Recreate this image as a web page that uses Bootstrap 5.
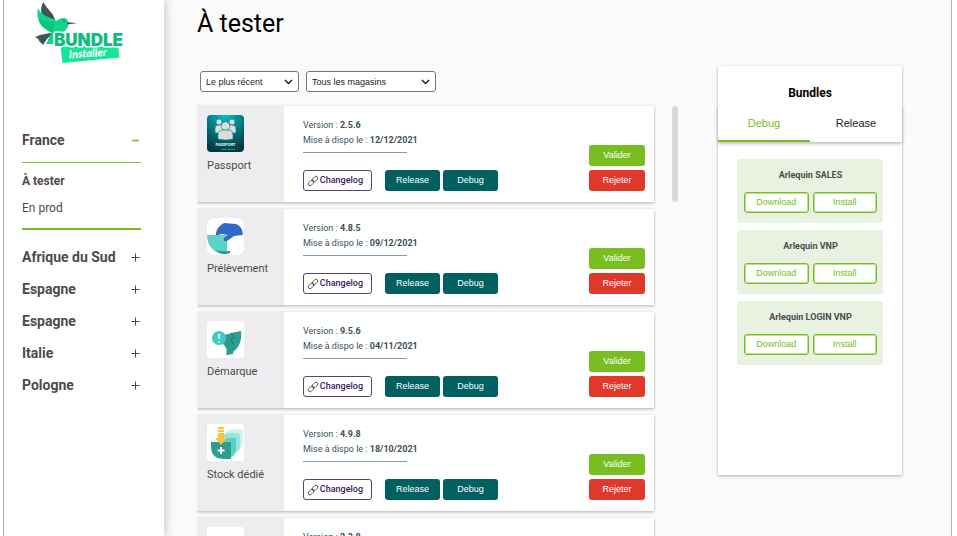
<!DOCTYPE html>
<html lang="fr">
<head>
<meta charset="utf-8">
<meta name="viewport" content="width=device-width, initial-scale=1">
<title>Bundle Installer</title>
<link href="https://cdn.jsdelivr.net/npm/bootstrap@5.3.0/dist/css/bootstrap.min.css" rel="stylesheet">
<style>
:root { --green: #78be20; --teal: #005f61; --ink: #3c4f5a; --grey: #4f4a4a; }
body { font-family: Roboto, "Noto Sans", sans-serif; color: var(--grey); }
.helv, select, .act { font-family: "Liberation Sans", Arial, sans-serif; }
.shell { height: 100vh; margin: 0 5px 0 3px; border: solid #b4b4b4; border-width: 0 1px; background: #fafafa; }
.side { width: 160px; padding: 0 23px 0 18px; background: #fff; box-shadow: 1px 0 10px rgba(0,0,0,.22); z-index: 1; }
.logo { margin: 0 0 60px 12px; display: block; }
.country { font-size: 14px; font-weight: 700; line-height: 18px; padding: 7px 0; margin: 0; border: 0; background: none; color: inherit; text-align: left; }
.sub { border: solid var(--green); border-width: 1px 0 2px; margin: 6px 0 11px; padding: 5px 0 6px; font-size: 12px; }
.sub a { display: block; line-height: 27px; color: inherit; text-decoration: none; }
.content { padding: 0 49px 0 33px; }
h1 { font-size: 25px; line-height: 30px; padding-top: 9px; margin: 0 0 28px; color: #000; font-weight: 400; }
.picks { padding: 4px 0 12px 3px; gap: 7px; }
.pick { height: 21px; font-size: 9px; line-height: 12px; padding: 0 24px 0 5px; color: #222; border: 1px solid #777; border-radius: 3px; background-color: #fff;
  background-size: 9px 6px; background-position: right 5px center;
  background-image: url("data:image/svg+xml,%3Csvg xmlns='http://www.w3.org/2000/svg' viewBox='0 0 9 6'%3E%3Cpath d='M1 1l3.500 3.500L8 1' fill='none' stroke='%23222' stroke-width='1.500'/%3E%3C/svg%3E"); }
.pick-sort { width: 99px; } .pick-shop { width: 130px; }
.app { background: #fff; height: 96px; flex: none; box-shadow: 0 1px 3px rgba(0,0,0,.3); }
.app-id { width: 87px; background: #ededef; padding: 9px 0 0 10px; font-size: 11px; line-height: 16px; }
.app-id svg { display: block; margin-bottom: 6px; }
.app-info { padding: 12px 0 11px 19px; font-size: 9px; line-height: 15px; color: var(--ink); }
.rule { width: 104px; height: 1px; background: #8b9ba5; margin-top: 4px; }
.act { font-size: 9px; line-height: 19px; height: 21px; border: 1px solid transparent; border-radius: 3px; padding: 0; color: #fff; width: 55px; }
.act.log { width: 69px; margin-right: 13px; padding: 0 8px 0 3px; font-family: Roboto, sans-serif; font-size: 9px; font-weight: 500; background: #fff; color: #3a1a5e; border-color: #5a4277; }
.act.dbg { margin-left: 3px; }
.teal { background: var(--teal); } .ok { background: var(--green); } .no { background: #e1382c; }
.ok, .no { width: 56px; }
.app-end { padding: 0 9px 11px 0; gap: 4px; }
.list { gap: 7px; padding: 2px 18px 0 4px; margin: 0 0 0 -4px; }
.thumb { width: 6px; height: 96px; margin-top: 2px; border-radius: 3px; background: #dadada; }
.bundles { width: 184px; height: 409px; margin: 66px 0 0 40px; background: #fff; box-shadow: 0 1px 3px rgba(0,0,0,.3); }
.bundles h2 { font-size: 12px; line-height: 18px; padding: 18px 0 4px; margin: 0; font-weight: 700; color: #000; }
.tabs { box-shadow: 0 2px 3px rgba(0,0,0,.25); }
.tabs button { flex: 1 1 0; height: 36px; font-size: 11px; padding: 0; border: solid transparent; border-width: 0 0 2px; background: none; color: #222; }
.tabs button.on { color: var(--green); border-color: var(--green); }
.packs { padding: 17px 19px 0; gap: 7px; }
.pack { background: #e9f1e1; border-radius: 3px; padding: 8px 6px 10px 7px; }
.pack h3 { font-size: 9px; line-height: 16px; font-weight: 700; margin: 0 0 9px; }
.act.out { flex: 1 1 0; color: var(--green); background: #fff; border-color: var(--green); box-shadow: inset 0 0 0 1px #bce08f; }
</style>
</head>
<body>
<svg width="0" height="0" class="position-absolute" aria-hidden="true"><defs>
<symbol id="plus" viewBox="0 0 9 9"><path d="M4.500 .5v8M.5 4.500h8" stroke="#4f4a4a" fill="none"/></symbol>
<symbol id="link" viewBox="0 0 12 12"><g transform="rotate(-45 6 6)" fill="none" stroke="#333" stroke-width=".8"><rect x="0" y="4.200" width="6.500" height="3.600" rx="1.800"/><rect x="5.500" y="4.200" width="6.500" height="3.600" rx="1.800"/></g></symbol>
</defs></svg>
<div class="shell d-flex overflow-hidden">
  <nav class="side d-flex flex-column flex-shrink-0" aria-label="Pays">
    <svg class="logo" width="92" height="64" viewBox="34 0 92 64" role="img" aria-label="Bundle Installer">
      <path d="M43.500 2C40 7 40.500 13 44 17l11 5C55 13 47 10 43.500 2z" fill="#43525f"/>
      <path d="M38 8c-2 9 1 18 9 22l5 3 7-11C50 17 41 16 38 8z" fill="#0fd68a"/>
      <path d="M35 37c7-3 13-4 18-4l-6 6-4 6c-2-3-4-3-4-5-2-2-2-2-4-3z" fill="#43525f"/>
      <path d="M53 22c5 0 5-4 10-4 4 0 5 2 5 5 1 7-5 10-12 11l-3 10h-7l6-12c-1-4-1-7 1-10z" fill="#11d58a"/>
      <path d="M39 19c2 7 7 11 13 14l3-10c-5-2-11-2-16-4z" fill="#08c47d"/>
      <path d="M67 22l10 1.300L67 24.500zM64 20.300a.8.8 0 1 0 .1 0z" fill="#43525f"/>
      <path d="M60.500 46.500L118 45l1.500 12.500L62.500 63z" fill="#11e795"/>
      <text x="54" y="45.500" font-family="Inter, sans-serif" font-weight="900" font-size="17" fill="#0cbd7c" stroke="#fff" stroke-width="3" paint-order="stroke" stroke-linejoin="round">BUNDLE</text>
      <text x="69" y="58.500" transform="rotate(-4 69 58)" font-family="Lato, sans-serif" font-style="italic" font-weight="900" font-size="11" fill="#fff">Installer</text>
    </svg>
    <button class="country d-flex justify-content-between align-items-center" aria-expanded="true">France <svg width="9" height="9" viewBox="0 0 9 9"><path d="M0 4.500h7" stroke="#78be20" stroke-width="1.500"/></svg></button>
    <div class="sub"><a href="#" class="fw-bold">À tester</a><a href="#">En prod</a></div>
    <button class="country d-flex justify-content-between align-items-center">Afrique du Sud <svg width="11" height="9"><use href="#plus"/></svg></button>
    <button class="country d-flex justify-content-between align-items-center">Espagne <svg width="11" height="9"><use href="#plus"/></svg></button>
    <button class="country d-flex justify-content-between align-items-center">Espagne <svg width="11" height="9"><use href="#plus"/></svg></button>
    <button class="country d-flex justify-content-between align-items-center">Italie <svg width="11" height="9"><use href="#plus"/></svg></button>
    <button class="country d-flex justify-content-between align-items-center">Pologne <svg width="11" height="9"><use href="#plus"/></svg></button>
  </nav>
  <main class="content d-flex flex-grow-1 align-items-start">
    <section class="d-flex flex-column flex-grow-1 h-100">
      <h1>À tester</h1>
      <div class="picks d-flex">
        <select class="form-select pick pick-sort" aria-label="Tri"><option>Le plus récent</option></select>
        <select class="form-select pick pick-shop" aria-label="Magasin"><option>Tous les magasins</option></select>
      </div>
      <div class="d-flex flex-grow-1 overflow-hidden">
      <div class="list d-flex flex-column flex-grow-1">
        <article class="app d-flex">
          <div class="app-id"><svg width="37" height="37" viewBox="0 0 37 37"><defs><radialGradient id="pg" cx=".5" cy="0" r="1"><stop offset="0" stop-color="#00c4cc"/><stop offset=".6" stop-color="#006a70"/><stop offset="1" stop-color="#00383e"/></radialGradient></defs><rect width="37" height="37" rx="4" fill="url(#pg)"/><g fill="#d9dede" stroke="#08747b" stroke-width=".6"><circle cx="12" cy="7" r="3"/><circle cx="25" cy="7" r="3"/><path d="M8 18v-5q0-3 4-3h4v8zM29 18v-5q0-3-4-3h-4v8z"/><circle cx="18.500" cy="11" r="4.300"/><path d="M11 24v-4q0-5 5-5h5q5 0 5 5v4q-7 2-15 0z"/></g><text x="18.500" y="31" text-anchor="middle" font-family="Roboto" font-weight="700" font-size="4" fill="#dfe">PASSPORT</text><text x="28" y="35" text-anchor="end" font-family="Roboto" font-size="2" fill="#bdd">LEROY MERLIN</text></svg>Passport</div>
          <div class="app-info d-flex flex-column flex-grow-1"><div>Version : <b>2.5.6</b></div><div>Mise à dispo le : <b>12/12/2021</b></div><div class="rule"></div>
            <div class="d-flex mt-auto"><button class="act log d-flex align-items-center justify-content-between"><svg width="12" height="12"><use href="#link"/></svg> Changelog</button><button class="act teal">Release</button><button class="act teal dbg">Debug</button></div></div>
          <div class="app-end d-flex flex-column justify-content-end"><button class="act ok">Valider</button><button class="act no">Rejeter</button></div>
        </article>
        <article class="app d-flex">
          <div class="app-id"><svg width="37" height="37" viewBox="0 0 37 37"><rect width="37" height="37" rx="7" fill="#fff"/><path d="M0 17h20v19C8 36 0 29 0 17z" fill="#5dd3c7"/><path d="M8 32q5 2 15 1v2q-9 3-15-3z" fill="#24998c"/><path d="M9 15q1-6 8-10l12 1q7 3 7 11l-9 1-7 5q-4 1-3-3l4-3-6-1-4 1q-3 1-2-2z" fill="#3069c8"/></svg>Prélèvement</div>
          <div class="app-info d-flex flex-column flex-grow-1"><div>Version : <b>4.8.5</b></div><div>Mise à dispo le : <b>09/12/2021</b></div><div class="rule"></div>
            <div class="d-flex mt-auto"><button class="act log d-flex align-items-center justify-content-between"><svg width="12" height="12"><use href="#link"/></svg> Changelog</button><button class="act teal">Release</button><button class="act teal dbg">Debug</button></div></div>
          <div class="app-end d-flex flex-column justify-content-end"><button class="act ok">Valider</button><button class="act no">Rejeter</button></div>
        </article>
        <article class="app d-flex">
          <div class="app-id"><svg width="37" height="37" viewBox="0 0 37 37"><rect width="37" height="37" rx="3" fill="#fff"/><path d="M17 14l8-2 2 4-3 3 3 5-1 9-7 1q2-7-3-11z" fill="#2b9d91"/><path d="M24 12l10-2q2 18-14 24l7-10-3-5 3-3z" fill="#2b9d91"/><path d="M24 12l3 4-3 3 3 5" fill="none" stroke="#126e66"/><circle cx="12" cy="17" r="7" fill="#44c9bd"/><path d="M12 13v5M12 20v1.500" stroke="#fff" stroke-width="1.500"/></svg>Démarque</div>
          <div class="app-info d-flex flex-column flex-grow-1"><div>Version : <b>9.5.6</b></div><div>Mise à dispo le : <b>04/11/2021</b></div><div class="rule"></div>
            <div class="d-flex mt-auto"><button class="act log d-flex align-items-center justify-content-between"><svg width="12" height="12"><use href="#link"/></svg> Changelog</button><button class="act teal">Release</button><button class="act teal dbg">Debug</button></div></div>
          <div class="app-end d-flex flex-column justify-content-end"><button class="act ok">Valider</button><button class="act no">Rejeter</button></div>
        </article>
        <article class="app d-flex">
          <div class="app-id"><svg width="37" height="37" viewBox="0 0 37 37"><rect width="37" height="37" rx="3" fill="#fff"/><path d="M18 8q8-5 18-2v12q0 8-8 10H18z" fill="#d4f1ed"/><path d="M16 11q8-4 17-1v11q-1 8-8 9h-9z" fill="#9be3dc"/><path d="M12 14h17v12q-1 8-9 8h-8z" fill="#5dcfc5"/><path d="M4 18h20v17h-7Q4 35 4 22z" fill="#2b9d91"/><path d="M14 23v7M10.500 26.500h7" stroke="#fff" stroke-width="2"/><path d="M11 9h6v5h3l-6 7-6-7h3zM11 3h6v2h-6zM11 6h6v2h-6z" fill="#fbc23a"/></svg>Stock dédié</div>
          <div class="app-info d-flex flex-column flex-grow-1"><div>Version : <b>4.9.8</b></div><div>Mise à dispo le : <b>18/10/2021</b></div><div class="rule"></div>
            <div class="d-flex mt-auto"><button class="act log d-flex align-items-center justify-content-between"><svg width="12" height="12"><use href="#link"/></svg> Changelog</button><button class="act teal">Release</button><button class="act teal dbg">Debug</button></div></div>
          <div class="app-end d-flex flex-column justify-content-end"><button class="act ok">Valider</button><button class="act no">Rejeter</button></div>
        </article>
        <article class="app d-flex">
          <div class="app-id"><svg width="37" height="37"><rect width="37" height="37" rx="3" fill="#fff"/></svg></div>
          <div class="app-info"><div>Version : <b>2.3.8</b></div></div>
        </article>
      </div>
      <div class="thumb"></div>
      </div>
    </section>
    <aside class="bundles flex-shrink-0">
      <h2 class="text-center">Bundles</h2>
      <div class="tabs d-flex" role="tablist"><button class="helv on" role="tab" aria-selected="true">Debug</button><button class="helv" role="tab">Release</button></div>
      <div class="packs d-flex flex-column">
        <div class="pack"><h3 class="text-center">Arlequin SALES</h3><div class="d-flex gap-1"><button class="act out">Download</button><button class="act out">Install</button></div></div>
        <div class="pack"><h3 class="text-center">Arlequin VNP</h3><div class="d-flex gap-1"><button class="act out">Download</button><button class="act out">Install</button></div></div>
        <div class="pack"><h3 class="text-center">Arlequin LOGIN VNP</h3><div class="d-flex gap-1"><button class="act out">Download</button><button class="act out">Install</button></div></div>
      </div>
    </aside>
  </main>
</div>
<script src="https://cdn.jsdelivr.net/npm/bootstrap@5.3.0/dist/js/bootstrap.bundle.min.js"></script>
</body>
</html>
